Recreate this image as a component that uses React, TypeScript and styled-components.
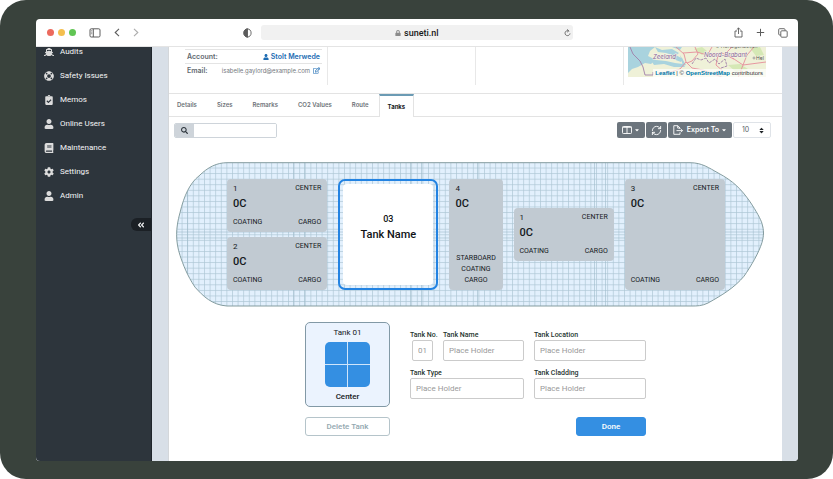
import React from "react";
import styled, { createGlobalStyle, css } from "styled-components";
import {
  FaShip,
  FaLifeRing,
  FaClipboardCheck,
  FaUser,
  FaBook,
  FaCog,
  FaSearch,
  FaRegEdit,
  FaSort,
  FaCaretDown,
  FaLock,
  FaAngleDoubleLeft,
} from "react-icons/fa";
import { RefreshCw } from "lucide-react";

const roboto = `Roboto, "Liberation Sans", sans-serif`;
const inter = `Inter, "Liberation Sans", sans-serif`;

const GlobalStyle = createGlobalStyle`
  *, *::before, *::after { box-sizing: border-box; }
  body { margin: 0; background: #fff; font-family: ${roboto}; }
  button, input, select { font: inherit; color: inherit; margin: 0; padding: 0; }
  button { border: 0; background: none; cursor: pointer; }
  a { color: inherit; text-decoration: none; }
  svg { display: block; flex: none; }
`;

const Frame = styled.div`
  display: flex;
  min-height: 100vh;
  padding: 19px 35px 18px 36px;
  border-radius: 26px;
  background: #39423c;
`;

const Browser = styled.div`
  display: flex;
  flex: 1;
  flex-direction: column;
  min-width: 0;
  overflow: hidden;
  border-radius: 4px;
  background: #fff;
`;

const BrowserBar = styled.header`
  display: grid;
  grid-template-columns: 225px minmax(0, 1fr) 225px;
  align-items: center;
  height: 28px;
  border-bottom: 1px solid #e4e4e4;
  color: #5c5c5c;
`;

const BarGroup = styled.div<{ $end?: boolean }>`
  display: flex;
  align-items: center;
  justify-content: ${(p) => (p.$end ? "flex-end" : "flex-start")};
  gap: 13px;
  padding: 0 ${(p) => (p.$end ? "10px" : "9px")} 0 11px;
`;

const Lights = styled.div`
  display: flex;
  gap: 4px;
`;

const Light = styled.span<{ $color: string }>`
  width: 7px;
  height: 7px;
  border-radius: 50%;
  background: ${(p) => p.$color};
`;

const BarButton = styled.button<{ $dim?: boolean; $push?: boolean }>`
  display: grid;
  place-items: center;
  opacity: ${(p) => (p.$dim ? 0.5 : 1)};
  margin-left: ${(p) => (p.$push ? "auto" : "0")};
`;

const AddressRow = styled.div`
  display: grid;
  grid-template-columns: minmax(0, 1fr) 8px;
  align-items: center;
  height: 15px;
  padding-right: 2px;
  border-radius: 3px;
  background: #f1f1f1;
`;

const AddressLabel = styled.label`
  display: flex;
  align-items: center;
  justify-content: center;
  gap: 3px;
  padding-left: 12px;
  color: #8b8b8b;
`;

const AddressInput = styled.input`
  width: 37px;
  border: 0;
  outline: 0;
  background: none;
  color: #1a1a1a;
  font: 500 9px/12px ${roboto};
`;

const Body = styled.div`
  display: flex;
  flex: 1;
  background: #d8dfe7;
`;

const Sidebar = styled.nav`
  display: flex;
  flex-direction: column;
  flex: none;
  width: 116px;
  padding: 0 0 12px;
  border-right: 1px solid #1f252b;
  background: #2d353c;
`;

const NavLink = styled.a`
  display: flex;
  align-items: center;
  gap: 6px;
  height: 24px;
  padding-left: 8px;
  color: #f5f6f7;
  font: 400 8px/12px ${roboto};

  &:first-child { height: 17px; padding-bottom: 8px; }
  svg { color: #dcdcdc; }
`;

const Collapse = styled.button`
  display: grid;
  place-items: center;
  align-self: flex-end;
  width: 20px;
  height: 13px;
  margin-top: 10px;
  border-radius: 6px 0 0 6px;
  background: #1b2025;
  color: #f0f1f2;
`;

const Main = styled.main`
  display: flex;
  flex: 1;
  flex-direction: column;
  min-width: 0;
  margin: 0 16px;
  padding-bottom: 25px;
  border-left: 1px solid #d4d7da;
  background: #fff;
`;

const Info = styled.section`
  display: grid;
  grid-template-columns: 159px 148px 148px minmax(0, 1fr);
  height: 47px;
  padding-bottom: 8px;
  border-bottom: 1px solid #e3e3e3;
`;

const InfoCell = styled.div`
  padding: 2px 5px 0 16px;
  border-right: 1px solid #e8e8e8;
`;

const MapCell = styled.div`
  padding: 0 16px 0 4px;
`;

const InfoRow = styled.div`
  display: flex;
  align-items: center;
  justify-content: space-between;
  height: 14px;
  padding: 0 2px;
  border-top: 1px solid #e4e4e4;
  color: #626970;
  font: 600 7px/10px ${inter};
`;

const InfoLink = styled.a`
  display: flex;
  align-items: center;
  gap: 2px;
  color: #1d6cb3;
`;

const Email = styled.span`
  display: flex;
  align-items: center;
  gap: 3px;
  color: #75797e;
  font-weight: 400;
  font-size: 6px;
`;

const Map = styled.div`
  position: relative;
  height: 30px;
  overflow: hidden;
  background: #eef0d6;
`;

const Attribution = styled.div`
  position: absolute;
  right: 0;
  bottom: 0;
  padding: 0 3px 0 2px;
  background: rgba(255, 255, 255, 0.7);
  color: #333;
  font: 400 6px/8px "Liberation Sans", sans-serif;
  white-space: nowrap;

  a { color: #0078a8; font-weight: 700; }
`;

const Tabs = styled.div`
  display: flex;
  height: 23px;
  border-bottom: 1px solid #e3e3e3;
`;

const Tab = styled.button<{ $active?: boolean }>`
  padding: 0 10px;
  color: #6d7278;
  font: 600 6px/8px ${inter};

  &:first-child { padding-left: 8px; }

  ${(p) =>
    p.$active &&
    css`
      margin-bottom: -1px;
      padding: 0 8px;
      border: solid #e3e3e3;
      border-width: 2px 1px 0;
      border-top-color: #6b9bb4;
      background: #fff;
      color: #16191c;
      font-weight: 700;
    `}
`;

const Toolbar = styled.div`
  display: flex;
  align-items: center;
  justify-content: space-between;
  padding: 5px 11px 0 5px;
`;

const Search = styled.label`
  display: flex;
  width: 103px;
  height: 15px;
  border: 1px solid #ced4da;
  border-radius: 2px;
  overflow: hidden;
`;

const SearchIcon = styled.span`
  display: grid;
  place-items: center;
  width: 19px;
  background: #ced4da;
  color: #2d353c;
`;

const SearchInput = styled.input`
  flex: 1;
  min-width: 0;
  padding: 0 4px;
  border: 0;
  font: 400 7px/10px ${inter};
`;

const Actions = styled.div`
  display: flex;
  gap: 1px;
`;

const ToolButton = styled.button`
  display: flex;
  align-items: center;
  gap: 2px;
  height: 16px;
  padding: 0 5px;
  border-radius: 2px;
  background: #6c757d;
  color: #fff;
  font: 600 7px/10px ${inter};
`;

const PageSize = styled.label`
  position: relative;
  display: flex;
  align-items: center;
  width: 38px;
  color: #212529;

  select {
    appearance: none;
    width: 100%;
    height: 16px;
    padding: 0 8px;
    border: 1px solid #dfe3e8;
    border-radius: 2px;
    background: #fff;
    color: #596067;
    font: 400 7px/10px ${inter};
  }
  svg { position: absolute; right: 6px; pointer-events: none; }
`;

const Deck = styled.section`
  position: relative;
  display: grid;
  grid-template-columns: 100fr 100fr 53fr 100fr 100fr;
  column-gap: 11px;
  margin: 24px 18px 0 7px;
  padding: 17px 39px 17px 51px;
`;

const HullDrawing = styled.svg`
  position: absolute;
  inset: 0;
  width: 100%;
  height: 100%;
`;

const Stack = styled.div`
  position: relative;
  display: flex;
  flex-direction: column;
  justify-content: center;
  gap: 5px;
  height: 111px;
`;

const TankTile = styled.button<{ $fill?: boolean }>`
  display: flex;
  flex: ${(p) => (p.$fill ? "1" : "0 0 53px")};
  flex-direction: column;
  justify-content: space-between;
  padding: 4px 6px;
  border-radius: 4px;
  background: #c1cad2;
  color: #14181c;
  text-align: left;
  font: 400 7px/11px ${roboto};
`;

const TileRow = styled.span`
  display: flex;
  justify-content: space-between;
`;

const TileNumber = styled.span`
  font-size: 8px;
`;

const Temperature = styled.span`
  display: block;
  margin-top: 3px;
  font: 500 11px/14px ${roboto};
`;

const TileFooter = styled.span`
  align-self: center;
  text-align: center;
`;

const SelectedTank = styled.button`
  display: flex;
  flex: 1;
  padding: 3px;
  border: 2px solid #2383e2;
  border-radius: 7px;
  color: #101316;
  font: 500 11px/16px ${roboto};
`;

const SelectedFace = styled.span`
  display: flex;
  flex: 1;
  align-self: stretch;
  flex-direction: column;
  align-items: center;
  justify-content: center;
  border-radius: 4px;
  background: #fff;
  padding-bottom: 16px;
`;

const SelectedNumber = styled.span`
  font-size: 9px;
`;

const Editor = styled.form`
  display: grid;
  grid-template-columns: 85px minmax(0, 236px);
  column-gap: 20px;
  row-gap: 10px;
  justify-content: center;
  margin-top: 15px;
`;

const TankCard = styled.div`
  display: flex;
  flex-direction: column;
  align-items: center;
  justify-content: space-between;
  height: 85px;
  padding: 4px;
  border: 1px solid #8299a6;
  border-radius: 5px;
  background: #ebf3fe;
  color: #14181c;
  font: 500 8px/11px ${roboto};
`;

const TankTitle = styled.span`
  font-weight: 400;
`;

const Quadrants = styled.div`
  display: grid;
  grid-template-columns: 1fr 1fr;
  gap: 1px;
  width: 45px;
  height: 45px;
  border-radius: 5px;
  overflow: hidden;
  background: #cfe5fb;

  span { background: #348fe2; }
`;

const Fields = styled.div`
  display: grid;
  grid-template-columns: 23px minmax(0, 1fr) minmax(0, 112px);
  column-gap: 10px;
  row-gap: 7px;
  align-content: start;
  padding-top: 8px;
`;

const Field = styled.label<{ $wide?: boolean; $small?: boolean }>`
  display: flex;
  flex-direction: column;
  grid-column: ${(p) => (p.$wide ? "span 2" : "auto")};
  color: #26352f;
  font: 500 7px/10px ${roboto};
  white-space: nowrap;

  input {
    width: 100%;
    height: 21px;
    padding: 0 5px;
    border: 1px solid #cbcbcb;
    border-radius: 2px;
    font: 400 8px/12px ${roboto};
    ${(p) => p.$small && "width: 21px; align-self: flex-end;"}
  }
  input::placeholder { color: #999; opacity: 1; }
`;

const FormButton = styled.button<{ $primary?: boolean }>`
  height: 19px;
  border: 1px solid ${(p) => (p.$primary ? "#348fe2" : "#b5c4ca")};
  border-radius: 3px;
  background: ${(p) => (p.$primary ? "#348fe2" : "#fff")};
  color: ${(p) => (p.$primary ? "#fff" : "#93a8b0")};
  font: 500 8px/12px ${roboto};
  ${(p) => p.$primary && "justify-self: end; width: 70px;"}
`;

const NAV = [
  { label: "Audits", icon: FaShip },
  { label: "Safety Issues", icon: FaLifeRing },
  { label: "Memos", icon: FaClipboardCheck },
  { label: "Online Users", icon: FaUser },
  { label: "Maintenance", icon: FaBook },
  { label: "Settings", icon: FaCog },
  { label: "Admin", icon: FaUser },
];

const TABS = ["Details", "Sizes", "Remarks", "CO2 Values", "Route", "Tanks"];

const HULL =
  "M51 .7 H514 C526 .7 533 6 542 11 C557 19 565 27 574 40 C580 49 585 58 586 62 C588 69 588 74 586 81 C583 91 575 105 568 115 C558 127 546 134 532 142 C526 145 521 145 516 145 H51 C36 144 27 135 19 126 C11 114 7 103 4 94 C-.5 80 -.5 67 4 51 C8 34 14 21 23 14 C32 5 41 .7 51 .7 Z";

function Hull() {
  return (
    <HullDrawing viewBox="0 0 588 146" preserveAspectRatio="none" aria-hidden="true">
      <defs>
        <pattern id="deck-grid" width="5.6" height="5.6" patternUnits="userSpaceOnUse">
          <rect width="5.6" height="5.6" fill="#e2f0fd" />
          <path d="M0 .5 H5.6 M.5 0 V5.6" stroke="#adc6d6" strokeWidth=".7" />
        </pattern>
        <clipPath id="hull-shape">
          <path d={HULL} />
        </clipPath>
      </defs>
      <path d={HULL} fill="url(#deck-grid)" />
      <path
        d="M11.5 0 V146 M117.5 0 V146 M128.5 0 V146 M234.5 0 V146 M245.5 0 V146 M301.5 0 V146 M418.5 0 V146 M429.5 0 V146 M0 70.5 H588 M0 76.5 H588"
        fill="none"
        stroke="#9dbaca"
        strokeWidth=".6"
        clipPath="url(#hull-shape)"
      />
      <path d={HULL} fill="none" stroke="#849c9f" />
    </HullDrawing>
  );
}

function WideTank({ no, fill }: { no: string; fill?: boolean }) {
  return (
    <TankTile type="button" $fill={fill}>
      <span>
        <TileRow>
          <TileNumber>{no}</TileNumber>
          <span>CENTER</span>
        </TileRow>
        <Temperature>0C</Temperature>
      </span>
      <TileRow>
        <span>COATING</span>
        <span>CARGO</span>
      </TileRow>
    </TankTile>
  );
}

function MapDrawing() {
  return (
    <svg width="100%" height="31" viewBox="0 0 138 31" preserveAspectRatio="xMinYMin slice" aria-hidden="true">
      <rect width="138" height="31" fill="#eff1d8" />
      <path d="M0 0 H27 L22 4 L20 9 L26 14 L23 17 L17 16 L10 20 L4 22 L0 26 Z" fill="#a9d3de" />
      <path d="M27 0 L34 3 L44 2 L51 6 L47 9 L38 6 L30 5 Z M20 9 L28 13 L38 14 L47 16 L55 17 L57 20 L46 20 L36 17 L26 18 Z M46 7 L55 12 L53 15 L45 12 Z" fill="#a9d3de" />
      <path d="M44 0 H54 L52 3 Z M52 8 L58 18 L55 19 Z" fill="#a9d3de" />
      <path d="M66 2 L74 0 L79 4 L74 8 Z M100 18 L112 17 L120 22 L108 25 Z M122 1 L132 0 L136 8 L128 9 Z" fill="#d5e8b5" />
      <g fill="none" stroke="#e58d9b" strokeWidth=".9">
        <path d="M48 0 L56 7 L58 15 L64 21 L75 23 L96 31" />
        <path d="M58 15 L52 22 L43 25 L30 26" />
        <path d="M55 6 L69 5 L79 8 L94 6 L106 12 L115 18 L138 15" />
        <path d="M67 0 L70 7 L64 14 L59 16 M84 0 L80 7 M104 0 L97 7 L106 12 M126 0 L119 8 L115 18 L110 31 M90 8 L88 18 L96 25" />
      </g>
      <g fill="none" stroke="#a27fa9" strokeWidth=".9">
        <path d="M2 0 L5 7 L12 14 L15 20 L17 28 L25 28 L25 25" />
        <path d="M64 17 L68 11 L73 13 L78 11 L81 16 L87 12 L91 17 L97 12 L99 19 L93 21" strokeDasharray="3 1" />
      </g>
      <g fontFamily={inter} fontSize="6" fontStyle="italic" fill="#876496" stroke="#f6f5e9" strokeWidth="1" paintOrder="stroke">
        <text x="25" y="12">Zeeland</text>
        <text x="76" y="10">Noord-Brabant</text>
      </g>
      <g fontFamily={inter} fontSize="5" fill="#555">
        <text x="87" y="1">’s-Hertogenbosch</text>
        <circle cx="126" cy="11" r="1" fill="#fff" stroke="#555" strokeWidth=".5" />
        <text x="128" y="13">Hel</text>
      </g>
    </svg>
  );
}

export default function App() {
  return (
    <>
      <GlobalStyle />
      <Frame>
        <Browser>
          <BrowserBar>
            <BarGroup>
              <Lights>
                <Light $color="#ec6a5e" />
                <Light $color="#f4bf4f" />
                <Light $color="#61c554" />
              </Lights>
              <BarButton type="button" aria-label="Toggle sidebar">
                <svg width="12" height="10" viewBox="0 0 12 10" fill="none" stroke="currentColor">
                  <rect x="1" y=".8" width="10" height="8.2" rx="1.2" />
                  <path d="M4.3 1 V9" />
                  <path d="M2 2.7 H3.3 M2 4.2 H3.3 M2 5.7 H3.3" strokeWidth=".6" />
                </svg>
              </BarButton>
              <BarButton type="button" aria-label="Back">
                <svg width="6" height="9" viewBox="0 0 6 9" fill="none" stroke="currentColor" strokeWidth="1.1">
                  <path d="M5 .8 L1.2 4.5 L5 8.2" />
                </svg>
              </BarButton>
              <BarButton type="button" aria-label="Forward" $dim>
                <svg width="6" height="9" viewBox="0 0 6 9" fill="none" stroke="currentColor" strokeWidth="1.1">
                  <path d="M1 .8 L4.8 4.5 L1 8.2" />
                </svg>
              </BarButton>
              <BarButton type="button" aria-label="Privacy report" $push>
                <svg width="9" height="10" viewBox="0 0 9 10" fill="none" stroke="currentColor" strokeWidth=".9">
                  <path d="M4.5 .8 C6.8 1.2 8.1 2.5 8.1 5 C8.1 7.4 6.8 8.6 4.5 9.2 C2.2 8.6 .9 7.4 .9 5 C.9 2.5 2.2 1.2 4.5 .8 Z" />
                  <path d="M4.5 .8 C2.2 1.2 .9 2.5 .9 5 C.9 7.4 2.2 8.6 4.5 9.2 Z" fill="currentColor" />
                </svg>
              </BarButton>
            </BarGroup>
            <AddressRow>
              <AddressLabel>
                <FaLock size={6} />
                <AddressInput aria-label="Address" defaultValue="suneti.nl" />
              </AddressLabel>
              <BarButton type="button" aria-label="Reload">
                <svg width="7" height="8" viewBox="0 0 7 8" fill="none" stroke="currentColor" strokeWidth=".8">
                  <path d="M5.2 2.3 A2.5 2.5 0 1 0 6 4.4 M3 .3 L4.7 1.8 L3.1 3.3" />
                </svg>
              </BarButton>
            </AddressRow>
            <BarGroup $end>
              <BarButton type="button" aria-label="Share">
                <svg width="9" height="11" viewBox="0 0 9 11" fill="none" stroke="currentColor" strokeWidth=".9">
                  <path d="M3 4 H1 V10 H8 V4 H6 M4.5 7 V1 M2.7 2.7 L4.5 .9 L6.3 2.7" />
                </svg>
              </BarButton>
              <BarButton type="button" aria-label="New tab">
                <svg width="9" height="9" viewBox="0 0 9 9" stroke="currentColor">
                  <path d="M4.5 .8 V8.2 M.8 4.5 H8.2" />
                </svg>
              </BarButton>
              <BarButton type="button" aria-label="Show tabs">
                <svg width="10" height="10" viewBox="0 0 10 10" fill="none" stroke="currentColor" strokeWidth=".9">
                  <rect x="2.8" y="2.8" width="6.4" height="6.4" rx="1" />
                  <path d="M2.8 7 H1.6 Q.7 7 .7 6 V1.6 Q.7 .7 1.6 .7 H6 Q7 .7 7 1.6 V2.6" />
                </svg>
              </BarButton>
            </BarGroup>
          </BrowserBar>

          <Body>
            <Sidebar>
              {NAV.map(({ label, icon: Icon }) => (
                <NavLink key={label} href="#">
                  <Icon size={10} />
                  {label}
                </NavLink>
              ))}
              <Collapse type="button" aria-label="Collapse menu">
                <FaAngleDoubleLeft size={8} />
              </Collapse>
            </Sidebar>

            <Main>
              <Info>
                <InfoCell>
                  <InfoRow>
                    <span>Account:</span>
                    <InfoLink href="#">
                      <FaUser size={6} />
                      Stolt Merwede
                    </InfoLink>
                  </InfoRow>
                  <InfoRow>
                    <span>Email:</span>
                    <Email>
                      isabelle.gaylord@example.com
                      <InfoLink href="#" aria-label="Edit email">
                        <FaRegEdit size={7} />
                      </InfoLink>
                    </Email>
                  </InfoRow>
                </InfoCell>
                <InfoCell />
                <InfoCell />
                <MapCell>
                  <Map>
                    <MapDrawing />
                    <Attribution>
                      <a href="#">Leaflet</a> | © <a href="#">OpenStreetMap</a> contributors
                    </Attribution>
                  </Map>
                </MapCell>
              </Info>

              <Tabs role="tablist">
                {TABS.map((t) => (
                  <Tab key={t} type="button" role="tab" aria-selected={t === "Tanks"} $active={t === "Tanks"}>
                    {t}
                  </Tab>
                ))}
              </Tabs>

              <Toolbar>
                <Search>
                  <SearchIcon>
                    <FaSearch size={7} />
                  </SearchIcon>
                  <SearchInput type="text" aria-label="Search" />
                </Search>
                <Actions>
                  <ToolButton type="button" aria-label="Columns">
                    <svg width="10" height="8" viewBox="0 0 10 8" fill="none" stroke="currentColor" strokeWidth=".9">
                      <rect x=".5" y=".5" width="9" height="7" rx=".8" />
                      <path d="M5 .5 V7.5 M.5 1.3 H9.5" />
                    </svg>
                    <FaCaretDown size={6} />
                  </ToolButton>
                  <ToolButton type="button" aria-label="Refresh">
                    <RefreshCw size={11} strokeWidth={2} />
                  </ToolButton>
                  <ToolButton type="button">
                    <svg width="12" height="10" viewBox="0 0 12 10" fill="none" stroke="currentColor" strokeWidth=".9">
                      <path d="M7 4 V3 L4.8 .7 H.8 V9.3 H7 V7.3 M4.7 .8 V3.1 H7 M3.5 5.6 H9.5 M8 4.1 L9.5 5.6 L8 7.1" />
                    </svg>
                    Export To
                    <FaCaretDown size={6} />
                  </ToolButton>
                  <PageSize>
                    <select aria-label="Rows per page" defaultValue="10">
                      <option>10</option>
                      <option>25</option>
                      <option>50</option>
                    </select>
                    <FaSort size={7} />
                  </PageSize>
                </Actions>
              </Toolbar>

              <Deck>
                <Hull />
                <Stack>
                  <WideTank no="1" />
                  <WideTank no="2" />
                </Stack>
                <Stack>
                  <SelectedTank type="button">
                    <SelectedFace>
                      <SelectedNumber>03</SelectedNumber>
                      <span>Tank Name</span>
                    </SelectedFace>
                  </SelectedTank>
                </Stack>
                <Stack>
                  <TankTile type="button" $fill>
                    <span>
                      <TileRow>
                        <TileNumber>4</TileNumber>
                      </TileRow>
                      <Temperature>0C</Temperature>
                    </span>
                    <TileFooter>
                      STARBOARD
                      <br />
                      COATING
                      <br />
                      CARGO
                    </TileFooter>
                  </TankTile>
                </Stack>
                <Stack>
                  <WideTank no="1" />
                </Stack>
                <Stack>
                  <WideTank no="3" fill />
                </Stack>
              </Deck>

              <Editor>
                <TankCard>
                  <TankTitle>Tank 01</TankTitle>
                  <Quadrants>
                    <span />
                    <span />
                    <span />
                    <span />
                  </Quadrants>
                  <span>Center</span>
                </TankCard>
                <Fields>
                  <Field $small>
                    Tank No.
                    <input type="text" placeholder="01" />
                  </Field>
                  <Field>
                    Tank Name
                    <input type="text" placeholder="Place Holder" />
                  </Field>
                  <Field>
                    Tank Location
                    <input type="text" placeholder="Place Holder" />
                  </Field>
                  <Field $wide>
                    Tank Type
                    <input type="text" placeholder="Place Holder" />
                  </Field>
                  <Field>
                    Tank Cladding
                    <input type="text" placeholder="Place Holder" />
                  </Field>
                </Fields>
                <FormButton type="button">Delete Tank</FormButton>
                <FormButton type="button" $primary>
                  Done
                </FormButton>
              </Editor>
            </Main>
          </Body>
        </Browser>
      </Frame>
    </>
  );
}
